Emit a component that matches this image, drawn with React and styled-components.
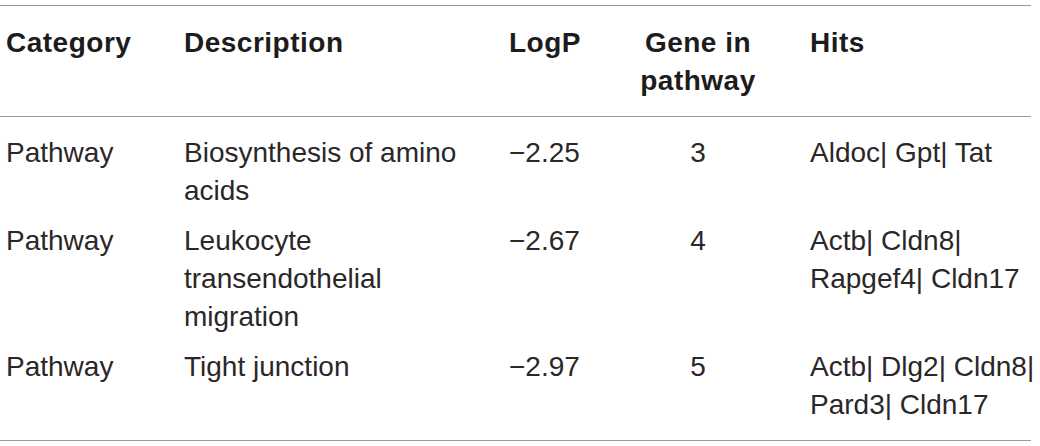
import React from "react";
import styled, { createGlobalStyle } from "styled-components";

const GlobalStyle = createGlobalStyle`
  html, body {
    margin: 0;
    padding: 0;
    background: #ffffff;
  }
  body {
    font-family: "Liberation Sans", Arial, Helvetica, sans-serif;
    color: #231f20;
  }
`;

const Page = styled.div`
  padding-top: 5px;
  width: 1040px;
`;

const Table = styled.table`
  width: 1031px;
  border-collapse: collapse;
  table-layout: fixed;
  border-top: 1px solid #9a9a9a;
  border-bottom: 1px solid #9a9a9a;
  font-size: 28px;
  line-height: 38px;
`;

const Head = styled.thead`
  border-bottom: 1px solid #9a9a9a;
`;

const HeadCell = styled.th`
  padding: 18px 6px 16px;
  font-weight: 700;
  letter-spacing: 0.5px;
  text-align: ${(p) => (p.$center ? "center" : "left")};
  vertical-align: top;
  color: #1e1b1c;
  white-space: nowrap;
`;

const Cell = styled.td`
  padding: ${(p) => (p.$first ? "17px" : "6px")} 6px
    ${(p) => (p.$last ? "16px" : "6px")};
  font-weight: 400;
  text-align: ${(p) => (p.$center ? "center" : "left")};
  vertical-align: top;
  color: #2b2728;
  white-space: nowrap;
`;

const Line = styled.span`
  display: block;
`;

const columns = [178, 325, 89, 212, 227];

const rows = [
  {
    category: "Pathway",
    description: ["Biosynthesis of amino", "acids"],
    logp: "\u22122.25",
    genes: "3",
    hits: ["Aldoc| Gpt| Tat"],
  },
  {
    category: "Pathway",
    description: ["Leukocyte", "transendothelial", "migration"],
    logp: "\u22122.67",
    genes: "4",
    hits: ["Actb| Cldn8|", "Rapgef4| Cldn17"],
  },
  {
    category: "Pathway",
    description: ["Tight junction"],
    logp: "\u22122.97",
    genes: "5",
    hits: ["Actb| Dlg2| Cldn8|", "Pard3| Cldn17"],
  },
];

const Lines = ({ items }) => items.map((t) => <Line key={t}>{t}</Line>);

export default function App() {
  return (
    <>
      <GlobalStyle />
      <Page>
        <Table>
          <colgroup>
            {columns.map((w, i) => (
              <col key={i} style={{ width: w }} />
            ))}
          </colgroup>
          <Head>
            <tr>
              <HeadCell>Category</HeadCell>
              <HeadCell>Description</HeadCell>
              <HeadCell>LogP</HeadCell>
              <HeadCell $center>
                <Line>Gene in</Line>
                <Line>pathway</Line>
              </HeadCell>
              <HeadCell>Hits</HeadCell>
            </tr>
          </Head>
          <tbody>
            {rows.map((r, i) => {
              const first = i === 0;
              const last = i === rows.length - 1;
              return (
                <tr key={i}>
                  <Cell $first={first} $last={last}>
                    {r.category}
                  </Cell>
                  <Cell $first={first} $last={last}>
                    <Lines items={r.description} />
                  </Cell>
                  <Cell $first={first} $last={last}>
                    {r.logp}
                  </Cell>
                  <Cell $first={first} $last={last} $center>
                    {r.genes}
                  </Cell>
                  <Cell $first={first} $last={last}>
                    <Lines items={r.hits} />
                  </Cell>
                </tr>
              );
            })}
          </tbody>
        </Table>
      </Page>
    </>
  );
}
